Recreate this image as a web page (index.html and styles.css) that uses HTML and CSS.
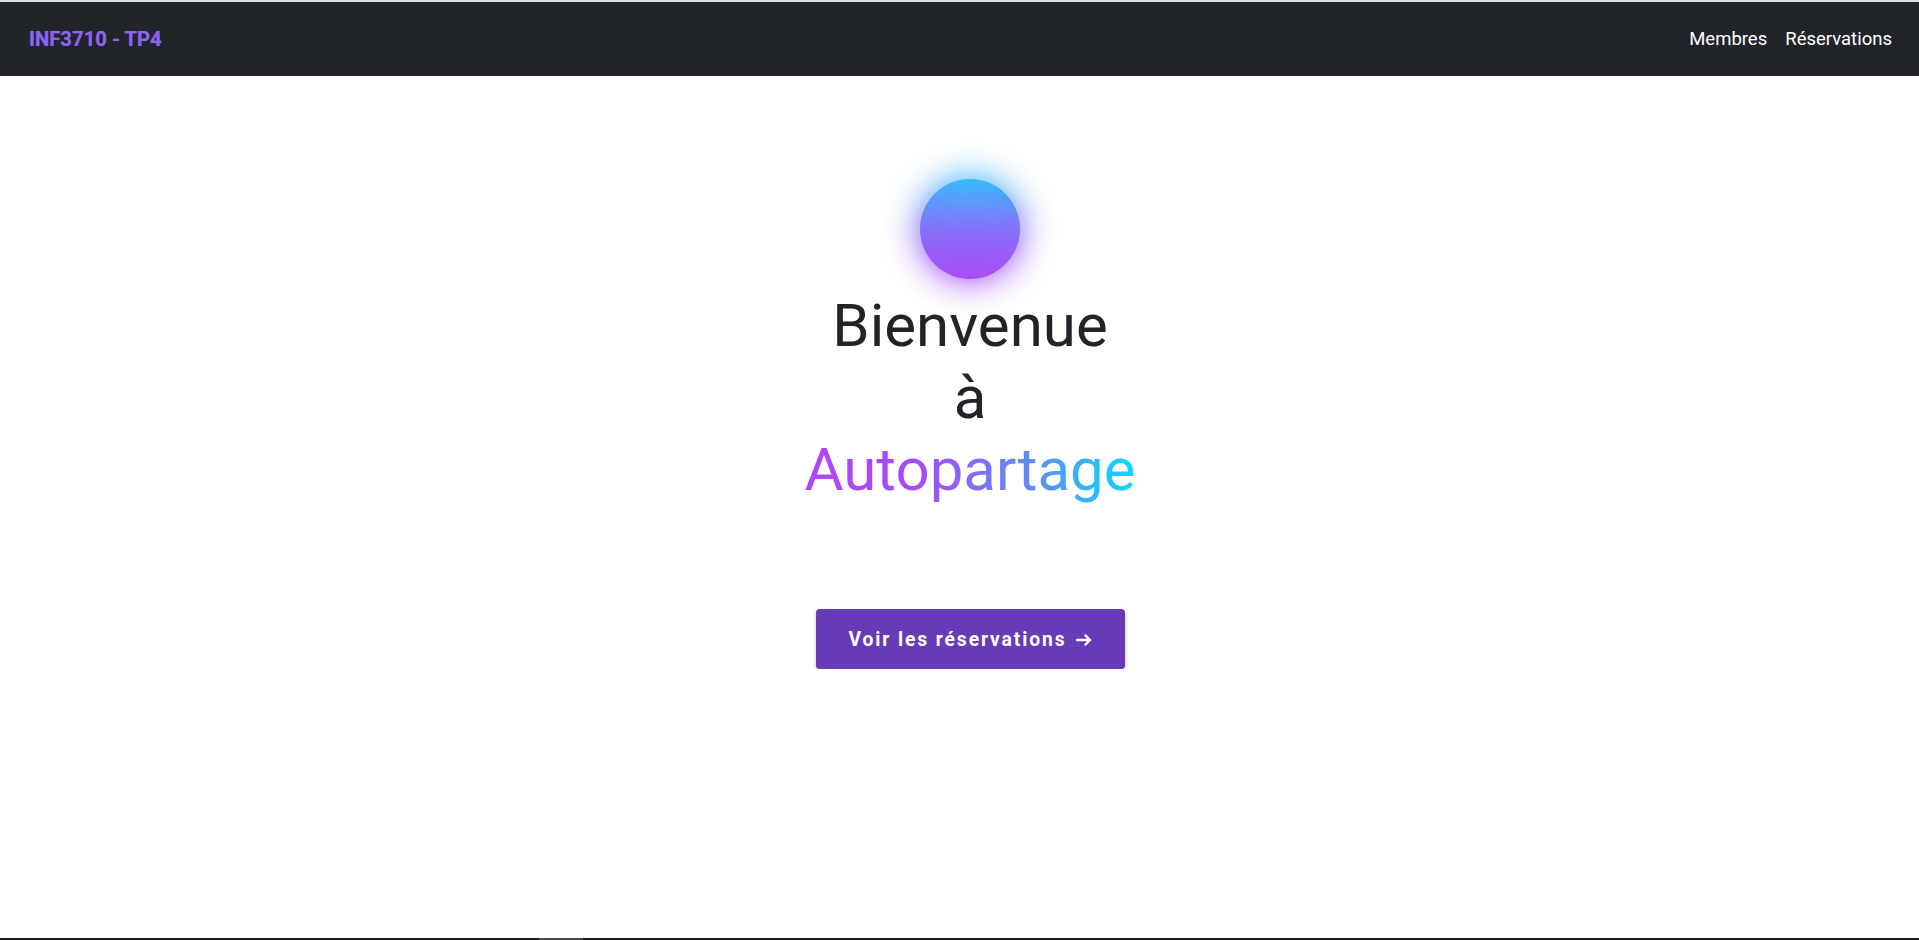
FILE: index.html
```html
<!DOCTYPE html>
<html lang="fr">
<head>
<meta charset="utf-8">
<title>INF3710 - TP4</title>
<link rel="stylesheet" href="styles.css">
</head>
<body>
<div class="topline"></div>
<nav class="navbar">
  <a class="brand" href="#">INF3710 - TP4</a>
  <div class="links">
    <a class="link" href="#">Membres</a>
    <a class="link" href="#">Réservations</a>
  </div>
</nav>
<main class="hero">
  <div class="orb"></div>
  <h1 class="title">
    <span class="line">Bienvenue</span>
    <span class="line">à</span>
    <span class="line grad">Autopartage</span>
  </h1>
  <a class="cta" href="#">Voir les réservations <svg class="arrow" width="16" height="12" viewBox="0 0 16 12" aria-hidden="true"><path d="M1 6 H14 M9.5 1.5 L14 6 L9.5 10.5" fill="none" stroke="#ffffff" stroke-width="2.4" stroke-linecap="round" stroke-linejoin="round"/></svg></a>
</main>
<div class="bottombar"><span class="thumb"></span></div>
</body>
</html>
```

FILE: styles.css
```css
html, body {
  margin: 0;
  padding: 0;
  background: #ffffff;
  font-family: Roboto, "Liberation Sans", Arial, sans-serif;
}

.topline {
  height: 2px;
  background: #dcdcdc;
}

.navbar {
  height: 74px;
  background: #212529;
  display: flex;
  align-items: center;
  justify-content: space-between;
  padding: 0 27px 0 29px;
}

.brand {
  color: #8b63f0;
  font-weight: 700;
  font-size: 20.3px;
  text-decoration: none;
  text-shadow: 0 0 1px rgba(139, 99, 240, 0.6);
}

.links {
  display: flex;
  gap: 18px;
}

.link {
  color: #ffffff;
  font-size: 18.5px;
  text-decoration: none;
}

.hero {
  display: flex;
  flex-direction: column;
  align-items: center;
  padding: 103px 0 0 21px;
}

.orb {
  width: 100px;
  height: 100px;
  border-radius: 50%;
  background: linear-gradient(180deg, #1ec8fa 0%, #7a7af8 45%, #b046f7 100%);
  position: relative;
  z-index: 0;
  filter: blur(0.6px);
}

.orb::before {
  content: "";
  position: absolute;
  inset: -4px;
  border-radius: 50%;
  background: linear-gradient(180deg, #2ecbff 0%, #8a6cf8 50%, #b046f7 100%);
  filter: blur(16px);
  opacity: 0.95;
  z-index: -1;
}

.title {
  margin: 11px 0 0 0;
  font-size: 60px;
  line-height: 72px;
  font-weight: 400;
  color: #212529;
  text-align: center;
}

.line {
  display: block;
}

.grad {
  background: linear-gradient(90deg, #b245f7 0%, #a64cf7 35%, #5b8ff8 70%, #08dbff 100%);
  -webkit-background-clip: text;
  background-clip: text;
  color: transparent;
}

.cta {
  margin-top: 103px;
  width: 309px;
  height: 60px;
  box-sizing: border-box;
  display: flex;
  align-items: center;
  justify-content: center;
  gap: 9px;
  background: #673ab7;
  color: #ffffff;
  font-size: 19.3px;
  font-weight: 700;
  letter-spacing: 1.9px;
  text-decoration: none;
  border-radius: 4px;
  box-shadow: 0 2px 4px rgba(0, 0, 0, 0.25);
}

.arrow {
  display: block;
  margin-top: 1px;
}

.bottombar {
  position: fixed;
  left: 0;
  right: 0;
  bottom: 0;
  height: 2px;
  background: #1e1e1e;
}

.thumb {
  position: absolute;
  left: 539px;
  width: 44px;
  top: 0;
  bottom: 0;
  background: #4a4a4a;
}
```
